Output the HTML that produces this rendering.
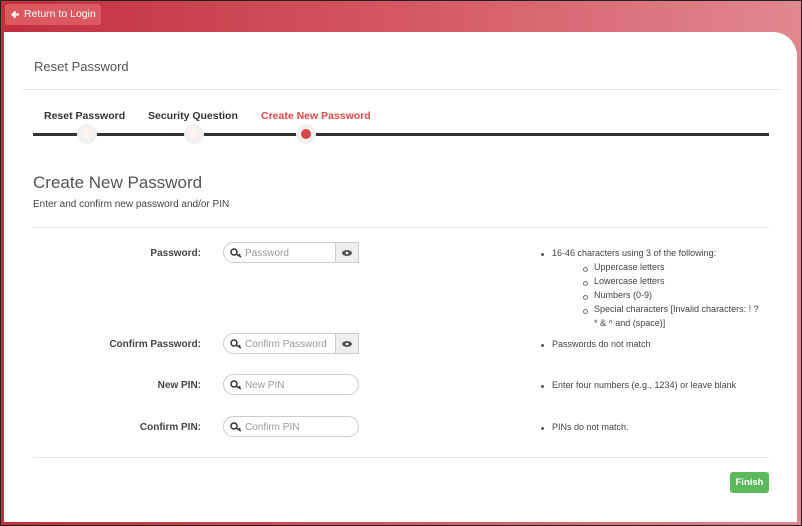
<!DOCTYPE html><html><head><style>
body{margin:0;width:802px;height:526px;overflow:hidden;font-family:"Liberation Sans",sans-serif;}
.bg{position:absolute;left:0;top:0;width:800px;height:524px;border:1px solid #222;background:linear-gradient(90deg,#c22f3d,#d45762 50%,#e0888f);}
.card{position:absolute;left:4px;top:32px;width:793px;height:490px;background:#fff;border-top-right-radius:24px;}
.a{position:absolute;white-space:nowrap;}
.btn{left:5px;top:4px;width:96px;height:21px;background:#dc5a5f;border-radius:3px;color:#fff;font-size:10.5px;line-height:21px;}
.hr{position:absolute;height:1px;background:#e8e8e8;}
.step{font-size:10.5px;font-weight:bold;color:#333;top:110px;}
.circ{position:absolute;width:20px;height:20px;border-radius:50%;background:#f1f1f1;top:124px;}
.circ i{position:absolute;left:5px;top:5px;width:10px;height:10px;border-radius:50%;background:#fdf3ee;}
.lbl{font-size:10px;font-weight:bold;color:#444;text-align:right;width:200px;left:1px;}
.inp{position:absolute;left:223px;width:134px;height:21px;border:1px solid #ccc;border-radius:11px;font-size:10px;color:#999;line-height:21px;box-sizing:border-box;}
.inp span{position:absolute;left:21px;}
.inp .eye{position:absolute;right:0;top:0;width:22px;height:19px;background:#eee;border-left:1px solid #ccc;}
.inp.pw{border-radius:11px 0 0 11px;}
.key{position:absolute;left:6px;top:5px;}
.r{font-size:9px;color:#444;left:552px;}
.dot{position:absolute;width:3px;height:3px;background:#555;border-radius:50%;}
.o{position:absolute;width:3px;height:3px;border:1px solid #777;border-radius:50%;}
</style></head><body>
<div class="bg"></div>
<div class="a btn"><svg style="position:absolute;left:6px;top:6px" width="9" height="9" viewBox="0 0 9 9"><path d="M8 4.5H2M4.5 1.5L1.5 4.5L4.5 7.5" stroke="#fff" stroke-width="2" fill="none"/></svg><span style="position:absolute;left:19px">Return to Login</span></div>
<div class="card"></div>
<div class="a" style="left:34px;top:59px;font-size:13px;color:#555">Reset Password</div>
<div class="hr" style="left:22px;top:89px;width:758px"></div>
<div class="a step" style="left:44px">Reset Password</div>
<div class="a step" style="left:148px">Security Question</div>
<div class="a step" style="left:261px;color:#e04a4a">Create New Password</div>
<div style="position:absolute;left:33px;top:133px;width:736px;height:3px;background:#333"></div>
<div class="circ" style="left:77px"><i></i></div>
<div class="circ" style="left:184px"><i></i></div>
<div class="circ" style="left:296px"><i style="background:#d9434b"></i></div>
<div class="a" style="left:33px;top:173px;font-size:17px;color:#555">Create New Password</div>
<div class="a" style="left:33px;top:199px;font-size:10px;color:#444">Enter and confirm new password and/or PIN</div>
<div class="hr" style="left:33px;top:227px;width:736px"></div>

<div class="a lbl" style="top:248px">Password:</div>
<div class="inp pw" style="top:242px;width:136px"><svg class="key" width="12" height="10" viewBox="0 0 12 10"><circle cx="4" cy="4" r="3" fill="none" stroke="#333" stroke-width="1.5"/><path d="M6 6l5 3M9 8l1-2" stroke="#333" stroke-width="1.5" fill="none"/></svg><span>Password</span><div class="eye"><svg width="22" height="19"><ellipse cx="11" cy="10" rx="5" ry="3" fill="#555"/><circle cx="11" cy="10" r="1.3" fill="#eee"/></svg></div></div>
<div class="a lbl" style="top:339px">Confirm Password:</div>
<div class="inp pw" style="top:333px;width:136px"><svg class="key" width="12" height="10" viewBox="0 0 12 10"><circle cx="4" cy="4" r="3" fill="none" stroke="#333" stroke-width="1.5"/><path d="M6 6l5 3M9 8l1-2" stroke="#333" stroke-width="1.5" fill="none"/></svg><span>Confirm Password</span><div class="eye"><svg width="22" height="19"><ellipse cx="11" cy="10" rx="5" ry="3" fill="#555"/><circle cx="11" cy="10" r="1.3" fill="#eee"/></svg></div></div>
<div class="a lbl" style="top:380px">New PIN:</div>
<div class="inp" style="top:374px;width:136px"><svg class="key" width="12" height="10" viewBox="0 0 12 10"><circle cx="4" cy="4" r="3" fill="none" stroke="#333" stroke-width="1.5"/><path d="M6 6l5 3M9 8l1-2" stroke="#333" stroke-width="1.5" fill="none"/></svg><span>New PIN</span></div>
<div class="a lbl" style="top:422px">Confirm PIN:</div>
<div class="inp" style="top:416px;width:136px"><svg class="key" width="12" height="10" viewBox="0 0 12 10"><circle cx="4" cy="4" r="3" fill="none" stroke="#333" stroke-width="1.5"/><path d="M6 6l5 3M9 8l1-2" stroke="#333" stroke-width="1.5" fill="none"/></svg><span>Confirm PIN</span></div>

<div class="dot" style="left:541px;top:253px"></div><div class="a r" style="top:248px">16-46 characters using 3 of the following:</div>
<div class="o" style="left:583px;top:267px"></div><div class="a r" style="left:594px;top:262px">Uppercase letters</div>
<div class="o" style="left:583px;top:281px"></div><div class="a r" style="left:594px;top:276px">Lowercase letters</div>
<div class="o" style="left:583px;top:295px"></div><div class="a r" style="left:594px;top:290px">Numbers (0-9)</div>
<div class="o" style="left:583px;top:309px"></div><div class="a r" style="left:594px;top:304px">Special characters [Invalid characters: ! ?</div>
<div class="a r" style="left:594px;top:318px">* &amp; ^ and (space)]</div>
<div class="dot" style="left:541px;top:344px"></div><div class="a r" style="top:339px">Passwords do not match</div>
<div class="dot" style="left:541px;top:385px"></div><div class="a r" style="top:380px">Enter four numbers (e.g., 1234) or leave blank</div>
<div class="dot" style="left:541px;top:427px"></div><div class="a r" style="top:422px">PINs do not match.</div>
<div class="hr" style="left:33px;top:457px;width:736px"></div>
<div class="a" style="left:730px;top:472px;width:39px;height:21px;background:#5cb85c;border-radius:3px;color:#fff;font-size:9.5px;font-weight:bold;text-align:center;line-height:21px">Finish</div>
</body></html>
